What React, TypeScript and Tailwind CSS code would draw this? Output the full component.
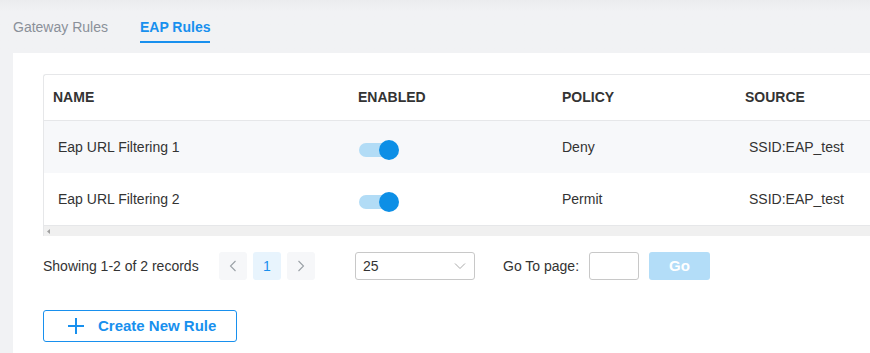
import React from "react";

const font = { fontFamily: '"Liberation Sans", Arial, sans-serif' };

function Toggle() {
  return (
    <div className="relative h-[20px] w-[40px]">
      <div className="absolute left-0 top-[3px] h-[14px] w-[32px] rounded-full bg-[#b2dcf6]" />
      <div className="absolute right-0 top-0 h-[20px] w-[20px] rounded-full bg-[#0d8fe6]" />
    </div>
  );
}

const rows = [
  { name: "Eap URL Filtering 1", policy: "Deny", source: "SSID:EAP_test", bg: "bg-[#f7f8fa]" },
  { name: "Eap URL Filtering 2", policy: "Permit", source: "SSID:EAP_test", bg: "bg-white" },
];

export default function App() {
  return (
    <div style={font} className="h-[353px] w-[870px] overflow-hidden bg-[#f1f2f4] text-[#333]">
      <div className="flex h-[53px] items-start gap-[32px] bg-gradient-to-b from-[#ebecee] to-[#f1f2f4] to-[12px] pl-[13px] pt-[17px] text-[14px]">
        <div className="text-[#8a9099]">Gateway Rules</div>
        <div className="flex flex-col">
          <span className="font-bold text-[#1890ee]">EAP Rules</span>
          <div className="mt-[3px] h-[2px] bg-[#1890ee]" />
        </div>
      </div>
      <div className="ml-[13px] h-[300px] bg-white pl-[30px] pt-[21px]">
        <div className="overflow-hidden rounded-tl-[3px] border-t border-l border-[#e6e7e9]">
          <div className="flex h-[46px] items-center border-b border-[#e6e7e9] text-[14px] font-bold">
            <div className="w-[305px] pl-[9px]">NAME</div>
            <div className="w-[204px] pl-[9px]">ENABLED</div>
            <div className="w-[183px] pl-[9px]">POLICY</div>
            <div className="pl-[9px]">SOURCE</div>
          </div>
          {rows.map((r) => (
            <div key={r.name} className={`flex h-[52px] items-center pt-[1px] text-[14px] ${r.bg}`}>
              <div className="w-[305px] pl-[14px]">{r.name}</div>
              <div className="w-[204px] pl-[10px] pt-[5px]">
                <Toggle />
              </div>
              <div className="w-[183px] pl-[9px]">{r.policy}</div>
              <div className="pl-[13px]">{r.source}</div>
            </div>
          ))}
          <div className="flex h-[11px] items-center border-t border-[#e6e7e9] bg-[#f0f0f0] pl-[3px]">
            <svg width="4" height="5" viewBox="0 0 4 5">
              <path d="M3 0 L0 2.5 L3 5 Z" fill="#a0a0a0" />
            </svg>
          </div>
        </div>
        <div className="mt-[16px] flex h-[28px] items-center text-[14px]">
          <span className="w-[176px]">Showing 1-2 of 2 records</span>
          <div className="flex gap-[6px]">
            <div className="flex h-[28px] w-[28px] items-center justify-center rounded-[3px] bg-[#f6f7f9]">
              <svg width="8" height="12" viewBox="0 0 8 12">
                <path d="M6.5 1 L1.5 6 L6.5 11" fill="none" stroke="#9aa0a6" strokeWidth="1.1" />
              </svg>
            </div>
            <div className="flex h-[28px] w-[28px] items-center justify-center rounded-[3px] bg-[#e8f4fd] text-[#1890ee]">1</div>
            <div className="flex h-[28px] w-[28px] items-center justify-center rounded-[3px] bg-[#f6f7f9]">
              <svg width="8" height="12" viewBox="0 0 8 12">
                <path d="M1.5 1 L6.5 6 L1.5 11" fill="none" stroke="#9aa0a6" strokeWidth="1.1" />
              </svg>
            </div>
          </div>
          <div className="ml-[40px] flex h-[28px] w-[120px] items-center justify-between rounded-[3px] border border-[#c8c8c8] pl-[7px] pr-[8px]">
            <span>25</span>
            <svg width="12" height="8" viewBox="0 0 12 8">
              <path d="M1 1.5 L6 6.5 L11 1.5" fill="none" stroke="#aaa" strokeWidth="1" />
            </svg>
          </div>
          <span className="ml-[28px]">Go To page:</span>
          <div className="ml-[10px] h-[28px] w-[50px] rounded-[3px] border border-[#c8c8c8]" />
          <div className="ml-[10px] flex h-[28px] w-[61px] items-center justify-center rounded-[3px] bg-[#b3ddf8] text-[15px] font-bold text-white">
            Go
          </div>
        </div>
        <div className="mt-[30px] flex h-[32px] w-[194px] items-center rounded-[3px] border border-[#1890ee] pl-[24px] text-[15px] font-bold text-[#1890ee]">
          <svg width="16" height="16" viewBox="0 0 16 16" className="mr-[14px]">
            <path d="M8 0 V16 M0 8 H16" stroke="#1890ee" strokeWidth="2" />
          </svg>
          Create New Rule
        </div>
      </div>
    </div>
  );
}
